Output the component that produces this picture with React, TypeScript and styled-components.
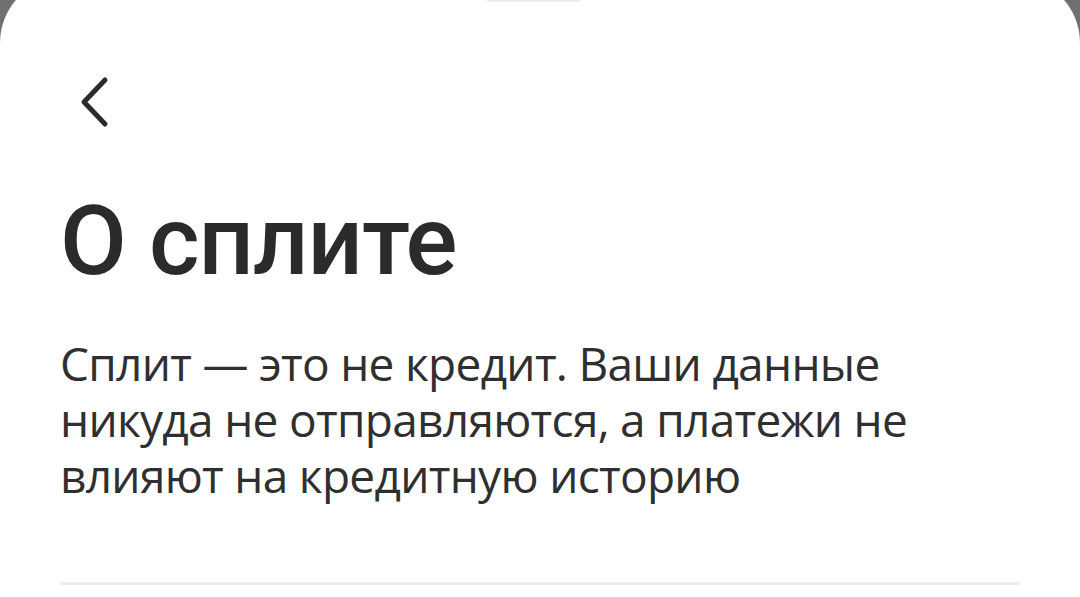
import React from 'react';
import styled, { createGlobalStyle } from 'styled-components';

const GlobalStyle = createGlobalStyle`
  html, body {
    margin: 0;
    padding: 0;
    background: #707070;
    overflow: hidden;
  }
  body {
    font-family: Roboto, "Noto Sans", sans-serif;
  }
`;

function BackIcon() {
  return (
    <svg width="34" height="52" viewBox="0 0 34 52" fill="none">
      <path
        d="M27 4 L6 26 L27 48"
        stroke="#2b2b2b"
        strokeWidth="5"
        strokeLinecap="round"
        strokeLinejoin="round"
      />
    </svg>
  );
}

function App() {
  return (
    <>
      <GlobalStyle />
      <Screen>
        <Sheet>
          <Handle />
          <BackButton type="button" aria-label="Назад">
            <BackIcon />
          </BackButton>
          <Title>О сплите</Title>
          <Description>
            Сплит — это не кредит. Ваши данные никуда не отправляются, а
            платежи не влияют на кредитную историю
          </Description>
          <Divider />
        </Sheet>
      </Screen>
    </>
  );
}

const Screen = styled.div`
  width: 1080px;
  height: 597px;
  overflow: hidden;
`;

const Sheet = styled.div`
  position: relative;
  margin-top: -23px;
  height: 700px;
  background: #ffffff;
  border-radius: 66px 66px 0 0;
  padding: 97px 60px 0 60px;
  box-sizing: border-box;
`;

const Handle = styled.div`
  position: absolute;
  top: 21px;
  left: 50%;
  width: 94px;
  height: 4px;
  margin-left: -53px;
  border-radius: 2px;
  background: #ececec;
`;

const BackButton = styled.button`
  display: flex;
  align-items: center;
  width: 48px;
  height: 56px;
  padding: 0;
  margin: 0 0 0 18px;
  border: none;
  background: none;
`;

const Title = styled.h1`
  margin: 56px 0 0 0;
  font-size: 97px;
  line-height: 110px;
  font-weight: 500;
  color: #2b2b2b;
  letter-spacing: -1px;
`;

const Description = styled.p`
  margin: 39px 0 0 0;
  max-width: 900px;
  font-family: "Open Sans", Roboto, sans-serif;
  font-size: 46px;
  line-height: 56px;
  font-weight: 400;
  letter-spacing: -0.7px;
  color: #2f2f2f;
`;

const Divider = styled.hr`
  margin: 79px 0 0 0;
  height: 3px;
  border: none;
  background: #ececec;
`;

export default App;
